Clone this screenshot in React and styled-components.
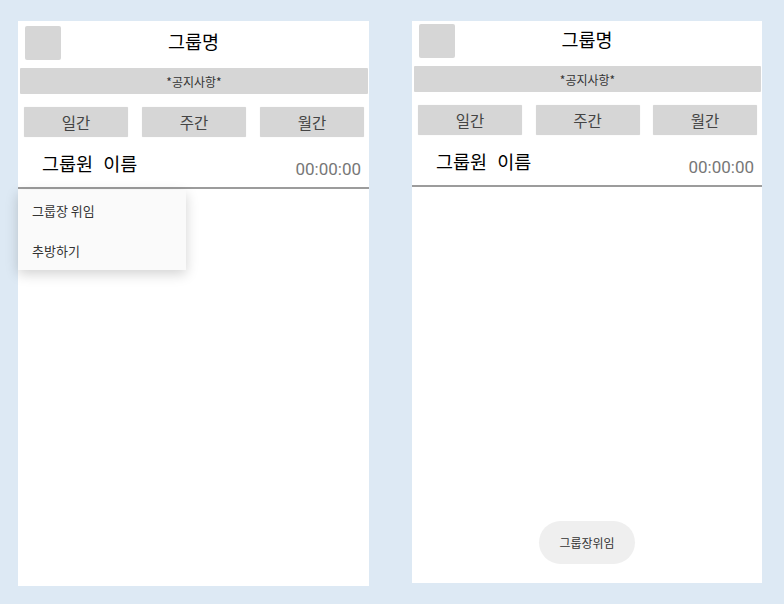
import React from "react";
import styled, { createGlobalStyle } from "styled-components";

const Global = createGlobalStyle`
  html, body { margin: 0; padding: 0; background: #dde9f4; }
  body { font-family: "Noto Sans CJK KR", "Noto Sans", sans-serif; }
`;

const Page = styled.div`
  display: flex;
  align-items: flex-start;
  gap: 43px;
  padding: 21px 0 0 18px;
  width: 784px;
  height: 604px;
  box-sizing: border-box;
`;

const Panel = styled.div`
  width: ${(p) => p.$w}px;
  height: ${(p) => p.$h}px;
  background: #ffffff;
  display: flex;
  flex-direction: column;
  padding-top: ${(p) => p.$top}px;
  box-sizing: border-box;
`;

const Header = styled.div`
  display: grid;
  grid-template-columns: 36px 1fr 36px;
  height: 34px;
  padding: 0 7px;
`;

const Avatar = styled.div`
  width: 36px;
  height: 34px;
  background: #d6d6d6;
  border-radius: 2px;
`;

const Title = styled.div`
  text-align: center;
  font-size: 18.5px;
  line-height: 30px;
  color: #000;
`;

const Notice = styled.div`
  margin: 8px 1px 0 2px;
  height: 26px;
  background: #d6d6d6;
  border-radius: 1px;
  display: flex;
  align-items: center;
  justify-content: center;
  font-size: 12px;
  color: #333;
`;

const Tabs = styled.div`
  display: flex;
  justify-content: space-between;
  margin-top: 13px;
  padding: 0 5px 0 6px;
`;

const Tab = styled.div`
  width: 104px;
  height: 30px;
  background: #d6d6d6;
  border-radius: 1px;
  box-shadow: 0 0 1px rgba(0, 0, 0, 0.12);
  display: flex;
  align-items: center;
  justify-content: center;
  font-size: 15.5px;
  color: #444;
`;

const MemberRow = styled.div`
  margin-top: 7px;
  height: 43px;
  display: flex;
  justify-content: space-between;
  border-bottom: 2px solid #9c9c9c;
`;

const MemberName = styled.div`
  padding-left: 24px;
  font-size: 18.5px;
  word-spacing: 6px;
  line-height: 38px;
  color: #000;
`;

const Time = styled.div`
  align-self: flex-end;
  padding: 0 8px 6px 0;
  font-family: Roboto, "Liberation Sans", sans-serif;
  font-size: 17px;
  line-height: 24px;
  color: #777;
`;

const Content = styled.div`
  position: relative;
  flex: 1;
  display: flex;
  flex-direction: column;
  justify-content: flex-end;
  align-items: center;
`;

const Menu = styled.div`
  position: absolute;
  top: 1px;
  left: 0;
  width: 168px;
  background: #fafafa;
  box-shadow: 0 4px 12px rgba(0, 0, 0, 0.18);
`;

const MenuItem = styled.div`
  height: 40px;
  display: flex;
  align-items: center;
  padding-left: 14px;
  font-size: 13px;
  color: #333;
`;

const Pill = styled.div`
  width: 96px;
  height: 43px;
  margin-bottom: 19px;
  border-radius: 22px;
  background: #efefef;
  display: flex;
  align-items: center;
  justify-content: center;
  font-size: 12px;
  color: #333;
`;

function Screen({ w, h, top, children }) {
  return (
    <Panel $w={w} $h={h} $top={top}>
      <Header>
        <Avatar />
        <Title>그룹명</Title>
        <div />
      </Header>
      <Notice>*공지사항*</Notice>
      <Tabs>
        <Tab>일간</Tab>
        <Tab>주간</Tab>
        <Tab>월간</Tab>
      </Tabs>
      <MemberRow>
        <MemberName>그룹원 이름</MemberName>
        <Time>00:00:00</Time>
      </MemberRow>
      <Content>{children}</Content>
    </Panel>
  );
}

export default function App() {
  return (
    <>
      <Global />
      <Page>
        <Screen w={351} h={565} top={5}>
          <Menu>
            <MenuItem>그룹장 위임</MenuItem>
            <MenuItem>추방하기</MenuItem>
          </Menu>
        </Screen>
        <Screen w={350} h={562} top={3}>
          <Pill>그룹장위임</Pill>
        </Screen>
      </Page>
    </>
  );
}
